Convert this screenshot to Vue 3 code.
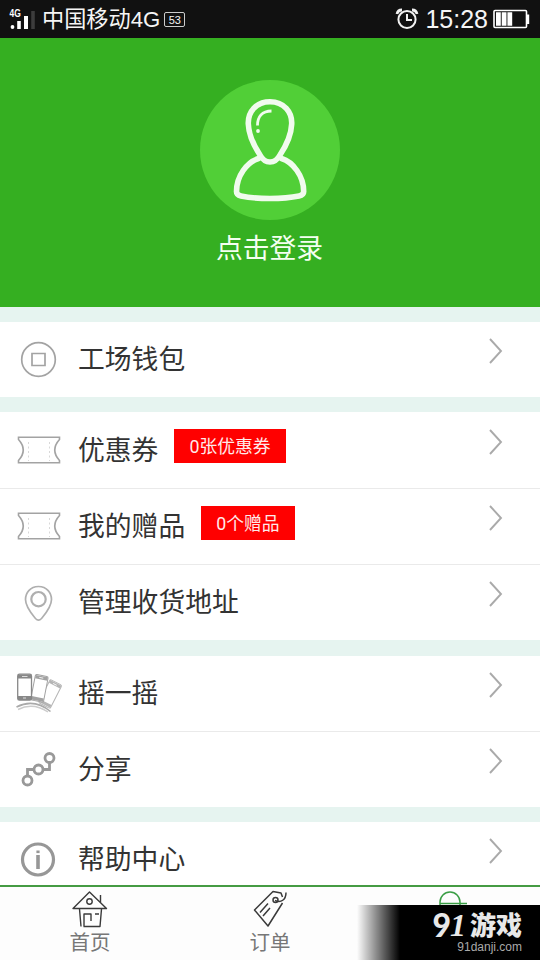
<script setup>
const groups = [
  { rows: [{ label: '工场钱包', icon: 'coin' }] },
  {
    rows: [
      { label: '优惠券', icon: 'ticket', badge: '0张优惠券' },
      { label: '我的赠品', icon: 'ticket', badge: '0个赠品' },
      { label: '管理收货地址', icon: 'pin' },
    ],
  },
  {
    rows: [
      { label: '摇一摇', icon: 'shake' },
      { label: '分享', icon: 'share' },
    ],
  },
  { rows: [{ label: '帮助中心', icon: 'info' }] },
]
</script>

<template>
  <div class="screen">
    <header class="status">
      <svg class="signal" width="30" height="38" viewBox="0 0 30 38">
        <text x="0" y="0" transform="translate(9.500 16.500) scale(.85 1)" class="net">4G</text>
        <circle cx="12.5" cy="27" r="1.9" fill="#fff" />
        <path d="M19 21v8" stroke="#fff" stroke-width="3.6" />
        <path d="M26 16v13" stroke="#fff" stroke-width="4" />
      </svg>
      <svg class="faint" width="11" height="38" viewBox="0 0 11 38">
        <path d="M3 11v18" stroke="#3c3c3c" stroke-width="3.6" />
      </svg>
      <span class="carrier">中国移动4G</span>
      <span class="pct">53</span>
      <span class="grow"></span>
      <svg width="24" height="38" viewBox="0 0 24 38" fill="none" stroke="#f2f2f2" stroke-width="2">
        <circle cx="12" cy="19.5" r="8.6" />
        <path d="M12 14v6h5" />
        <path d="M2 14a5 5 0 0 1 5-4M22 14a5 5 0 0 0-5-4" stroke-width="2.8" />
      </svg>
      <span class="clock">15:28</span>
      <svg class="battery" width="37" height="38" viewBox="0 0 37 38">
        <rect x="1" y="10.500" width="32.500" height="17" rx="1" fill="none" stroke="#fff" stroke-width="1.6" />
        <path d="M34 14.500h2.200v9.500h-2.200z" fill="#fff" />
        <path d="M3 12.300h4.800v13.500H3zM8.700 12.300h4.800v13.500H8.700zM14.400 12.300h4.800v13.500h-4.800z" fill="#fff" />
      </svg>
    </header>

    <section class="hero">
      <svg class="avatar" width="140" height="140" viewBox="0 0 140 140">
        <circle cx="70" cy="70" r="70" fill="#51cf37" />
        <g fill="none" stroke="#f1fbee" stroke-width="5.6" stroke-linecap="round" stroke-linejoin="round">
          <path d="M70 21.700C56 21.700 47.800 32 48.300 44C48.800 55 54 66 60 75C63 80.500 66 82 70 82S77 80.500 80 75C86 66 91.200 55 91.700 44C92.200 32 84 21.700 70 21.700Z" />
          <path d="M58.500 78.500C47 82 36.500 96 36.500 111.500Q36.500 115 41 116Q53 118.500 70 118.500T99 116Q103.700 115 103.700 111.500C103.700 96 93 82 81.500 78.500" />
          <path d="M71.500 31C62 31 57.500 37 57.500 45.500" stroke-width="2.8" stroke-linecap="butt" />
        </g>
        <circle cx="58" cy="51" r="1.900" fill="#f1fbee" />
      </svg>
      <div class="login">点击登录</div>
    </section>

    <main>
      <section v-for="(group, g) in groups" :key="g" class="group">
        <div v-for="row in group.rows" :key="row.label" class="row">
          <svg class="icon" width="78" height="75" viewBox="0 0 78 75" fill="none" stroke="#a3a3a3">
            <g v-if="row.icon === 'coin'" stroke-width="1.7">
              <circle cx="38.500" cy="37.500" r="16.800" />
              <path d="M32 31.500h13v12H32z" />
            </g>
            <g v-else-if="row.icon === 'ticket'">
              <path d="M18.500 24.200H59.500V26.500Q50 37 59.500 47.500V49.800H18.500V47.500Q28 37 18.500 26.500Z" stroke-width="1.600" />
              <path d="M28.500 29v19M49.500 29v19" stroke="#d8d8d8" stroke-dasharray="2 2.500" />
            </g>
            <g v-else-if="row.icon === 'pin'" stroke="#afafaf">
              <path d="M38.500 21.500C30 21.500 25.500 28 25.500 34.500C25.500 42 33 50.500 35.500 53.500Q38.500 56.800 41.500 53.500C44 50.500 51.500 42 51.500 34.500C51.500 28 47 21.500 38.500 21.500Z" stroke-width="1.700" />
              <circle cx="38.500" cy="34.200" r="7.200" stroke-width="2.200" />
            </g>
            <g v-else-if="row.icon === 'shake'">
              <g stroke="#b5b5b5" fill="#fff">
                <g transform="translate(50 22.500) rotate(27)">
                  <rect x=".7" y=".7" width="13" height="26" rx="1.500" />
                  <path d="M1 2.800h12.400M1 24.500h12.400" stroke-width="3" />
                  <path d="M5 3h4" stroke="#fff" stroke-width=".8" />
                </g>
                <g transform="translate(35 17.500) rotate(11)" stroke="#a2a2a2">
                  <rect x=".7" y=".7" width="13" height="26" rx="1.500" />
                  <path d="M1 3h12.400M1 24.500h12.400" stroke-width="3.500" />
                  <path d="M5 3h4" stroke="#fff" stroke-width=".8" />
                </g>
                <g stroke="#888">
                  <rect x="17.700" y="18.200" width="13.800" height="26" rx="1.800" stroke-width="1.300" />
                  <path d="M18 20.500h13.200M18 42h13.200" stroke-width="4" />
                  <path d="M22 20.500h5.500M23 42h3" stroke="#ddd" stroke-width="1" />
                </g>
              </g>
              <path d="M16.500 51Q34 42 50.500 55.500" stroke="#aaa" stroke-width="1.600" />
              <path d="M18 53.500Q33 46 48 56" stroke="#ccc" stroke-width="1.500" />
            </g>
            <g v-else-if="row.icon === 'share'" stroke="#999" stroke-width="2.800">
              <path d="M27.500 43V37.500H34M43 37.500H49.500V31" />
              <circle cx="49.500" cy="26" r="4.500" />
              <circle cx="38.500" cy="37.500" r="4.500" />
              <circle cx="27.500" cy="48.500" r="4.500" />
            </g>
            <g v-else stroke="#979797">
              <circle cx="38" cy="37.500" r="15.500" stroke-width="3.200" />
              <path d="M38 33v14" stroke-width="3.600" />
              <path d="M38 28.500v2.600" stroke-width="3.200" />
            </g>
          </svg>
          <span class="label">{{ row.label }}</span>
          <span v-if="row.badge" class="badge">{{ row.badge }}</span>
          <span class="grow"></span>
          <svg class="chevron" width="16" height="28" viewBox="0 0 16 28">
            <path d="M2 2L13 14L2 26" fill="none" stroke="#aaa" stroke-width="1.900" />
          </svg>
        </div>
      </section>
    </main>

    <nav class="tabs">
      <div class="tab">
        <svg width="38" height="39" viewBox="0 0 38 39" fill="none" stroke="#3a3a3a" stroke-width="1.400" stroke-linejoin="round">
          <path d="M2 21.500L18.500 5L35.500 21.500ZM29.500 15.500V8M8.500 22L10 39.500M12.500 39.500H29L30.500 22M13 39.500V27H20V34M24 27H28" />
          <circle cx="18.500" cy="14.500" r="2.700" />
        </svg>
        <span>首页</span>
      </div>
      <div class="tab">
        <svg width="38" height="39" viewBox="0 0 38 39" fill="none" stroke="#3a3a3a" stroke-width="1.500" stroke-linejoin="round">
          <path d="M31.500 16L17 39L3.500 23L22 4.500L30 6L31.500 10M9 25.500L17 16.500M12 29L19 21M24 13.500C30 16 35 13 35 5.500" />
          <circle cx="24.500" cy="13" r="2.500" />
        </svg>
        <span>订单</span>
      </div>
      <div class="tab">
        <svg width="38" height="39" viewBox="0 0 38 39" fill="none" stroke="#3a9e45" stroke-width="1.500">
          <path d="M9 18V15a10 10 0 0 1 20 0V18M9 16.500H36" />
        </svg>
      </div>
      <div class="watermark">
        <div class="brand"><b class="nine">9</b><b class="one">1</b><b class="game">游戏</b></div>
        <div class="site">91danji.com</div>
      </div>
    </nav>
  </div>
</template>

<style>
body {
  margin: 0;
}
</style>

<style scoped>
.screen {
  width: 540px;
  height: 960px;
  overflow: hidden;
  display: flex;
  flex-direction: column;
  background: #e6f4f0;
  color: #333;
  font-family: "Noto Sans CJK SC", sans-serif;
}
.grow {
  flex: 1;
}
.status {
  height: 38px;
  flex: none;
  box-sizing: border-box;
  padding-right: 10px;
  display: flex;
  align-items: center;
  background: #111;
  color: #f5f5f5;
}
.net {
  font: bold 10px "Liberation Sans", sans-serif;
  fill: #fff;
}
.carrier {
  margin: 2px 0 0 1px;
  font: 22.2px/38px "Liberation Sans", "Noto Sans CJK SC", sans-serif;
  white-space: nowrap;
}
.pct {
  margin-left: 4px;
  width: 19px;
  height: 13px;
  border: 1px solid #ccc;
  border-radius: 2px;
  font: 11px/14px "Liberation Sans", sans-serif;
  text-align: center;
}
.clock {
  margin: 0 5px 0 6px;
  font: 25px/38px "Liberation Sans", sans-serif;
}
.hero {
  height: 269px;
  flex: none;
  display: flex;
  flex-direction: column;
  align-items: center;
  background: #35af21;
}
.avatar {
  margin-top: 42px;
  flex: none;
}
.login {
  margin: 7px 1px 0 0;
  font-size: 26.8px;
  line-height: 40px;
  color: #f4fff1;
}
main {
  flex: 1;
  min-height: 0;
  overflow: hidden;
}
.group {
  margin-top: 15px;
  background: #fff;
}
.group:nth-child(3) {
  margin-top: 16px;
}
.row {
  height: 75px;
  display: flex;
  align-items: center;
}
.row + .row {
  border-top: 1px solid #eaeaea;
}
.group:nth-child(2) .row:first-child {
  height: 76px;
}
.icon {
  flex: none;
}
.label {
  margin-bottom: 3px;
  font-size: 26.8px;
  line-height: 40px;
}
.badge {
  height: 34px;
  margin: 0 0 8px 16px;
  padding: 0 15px;
  background: #f00;
  color: #ffeaea;
  font: 17.8px/35px Roboto, "Noto Sans CJK SC", sans-serif;
}
.chevron {
  margin: 0 36px 17px 0;
}
.tabs {
  height: 75px;
  flex: none;
  box-sizing: border-box;
  border-top: 2px solid #459b43;
  position: relative;
  display: flex;
  background: #fdfdfd;
}
.tab {
  width: 180px;
  display: flex;
  flex-direction: column;
  align-items: center;
  font-size: 20.5px;
  line-height: 30px;
  color: #777;
}
.tab svg {
  overflow: visible;
}
.watermark {
  position: absolute;
  right: 0;
  bottom: 0;
  width: 183px;
  height: 55px;
  box-sizing: border-box;
  padding: 4px 18px 0 0;
  background: linear-gradient(90deg, transparent, #000 43px);
  text-align: right;
}
.brand {
  height: 32px;
  display: flex;
  justify-content: flex-end;
  align-items: center;
  color: #e8e8e8;
}
.nine {
  margin-right: -1px;
  font: 900 32px/32px Lato, sans-serif;
}
.one {
  margin-right: 4px;
  font: italic 900 32px/32px "Liberation Serif", serif;
}
.game {
  margin-bottom: 2px;
  font: 900 26px/32px "Noto Sans CJK SC", sans-serif;
}
.site {
  margin-top: -1px;
  font: 12px/14px "Liberation Sans", sans-serif;
  color: #aaa;
}
</style>
